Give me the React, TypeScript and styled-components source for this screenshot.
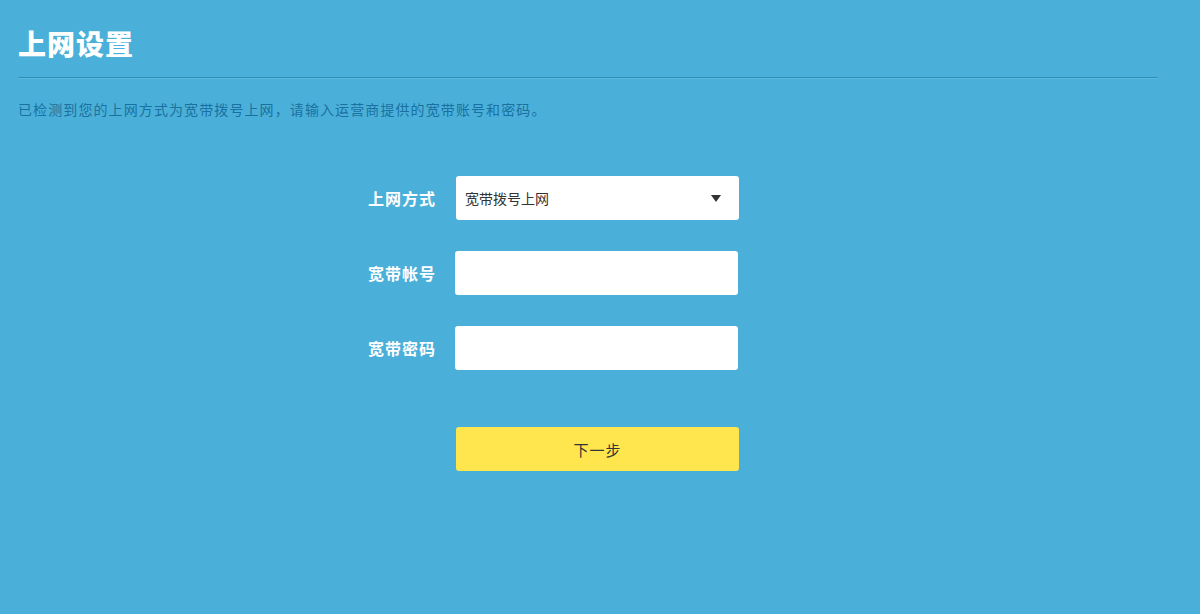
import React from "react";
import styled, { createGlobalStyle } from "styled-components";

const Global = createGlobalStyle`
  html, body { margin: 0; padding: 0; background: #4ab0d9; }
  body { font-family: "Noto Sans CJK SC", "Noto Sans", sans-serif; }
  * { box-sizing: border-box; }
`;

const Page = styled.div`
  width: 1200px;
  height: 614px;
  background: #4ab0d9;
  padding: 26px 42px 0 18px;
`;

const Title = styled.h1`
  margin: 0;
  font-size: 28px;
  line-height: 34px;
  font-weight: 900;
  color: #ffffff;
  letter-spacing: 1px;
`;

const Divider = styled.div`
  margin-top: 17px;
  height: 2px;
  background: #2f8db6;
  border-bottom: 1px solid #5ab9de;
`;

const Desc = styled.p`
  margin: 20px 0 0;
  font-size: 14px;
  line-height: 20px;
  color: #1a70a0;
  letter-spacing: 1.1px;
`;

const Form = styled.div`
  margin: 57px 0 0 318px;
  display: flex;
  flex-direction: column;
  gap: 31px;
`;

const Row = styled.div`
  display: flex;
  align-items: center;
  gap: 19px;
`;

const Label = styled.div`
  width: 100px;
  text-align: right;
  font-size: 16px;
  font-weight: 700;
  color: #ffffff;
  letter-spacing: 1px;
`;

const Field = styled.div<{ $offset?: number }>`
  width: 283px;
  height: 44px;
  background: #ffffff;
  border-radius: 3px;
  margin-left: ${(p) => p.$offset ?? 0}px;
  display: flex;
  align-items: center;
  justify-content: space-between;
  padding: 0 18px 0 9px;
  font-size: 14px;
  color: #333333;
`;

const Input = styled.input`
  width: 283px;
  height: 44px;
  border: none;
  outline: none;
  background: #ffffff;
  border-radius: 3px;
  padding: 0 9px;
  font-size: 14px;
  font-family: inherit;
`;

const Caret = styled.span`
  width: 0;
  height: 0;
  border-left: 5px solid transparent;
  border-right: 5px solid transparent;
  border-top: 7px solid #333333;
`;

const ButtonRow = styled.div`
  margin: 57px 0 0 438px;
`;

const Button = styled.button`
  width: 283px;
  height: 44px;
  border: none;
  border-radius: 3px;
  background: #ffe64f;
  color: #333333;
  font-size: 15px;
  font-family: inherit;
  cursor: pointer;
  letter-spacing: 1px;
`;

export default function App() {
  return (
    <>
      <Global />
      <Page>
        <Title>上网设置</Title>
        <Divider />
        <Desc>已检测到您的上网方式为宽带拨号上网，请输入运营商提供的宽带账号和密码。</Desc>
        <Form>
          <Row>
            <Label>上网方式</Label>
            <Field $offset={1}>
              <span>宽带拨号上网</span>
              <Caret />
            </Field>
          </Row>
          <Row>
            <Label>宽带帐号</Label>
            <Input type="text" />
          </Row>
          <Row>
            <Label>宽带密码</Label>
            <Input type="password" />
          </Row>
        </Form>
        <ButtonRow>
          <Button>下一步</Button>
        </ButtonRow>
      </Page>
    </>
  );
}
